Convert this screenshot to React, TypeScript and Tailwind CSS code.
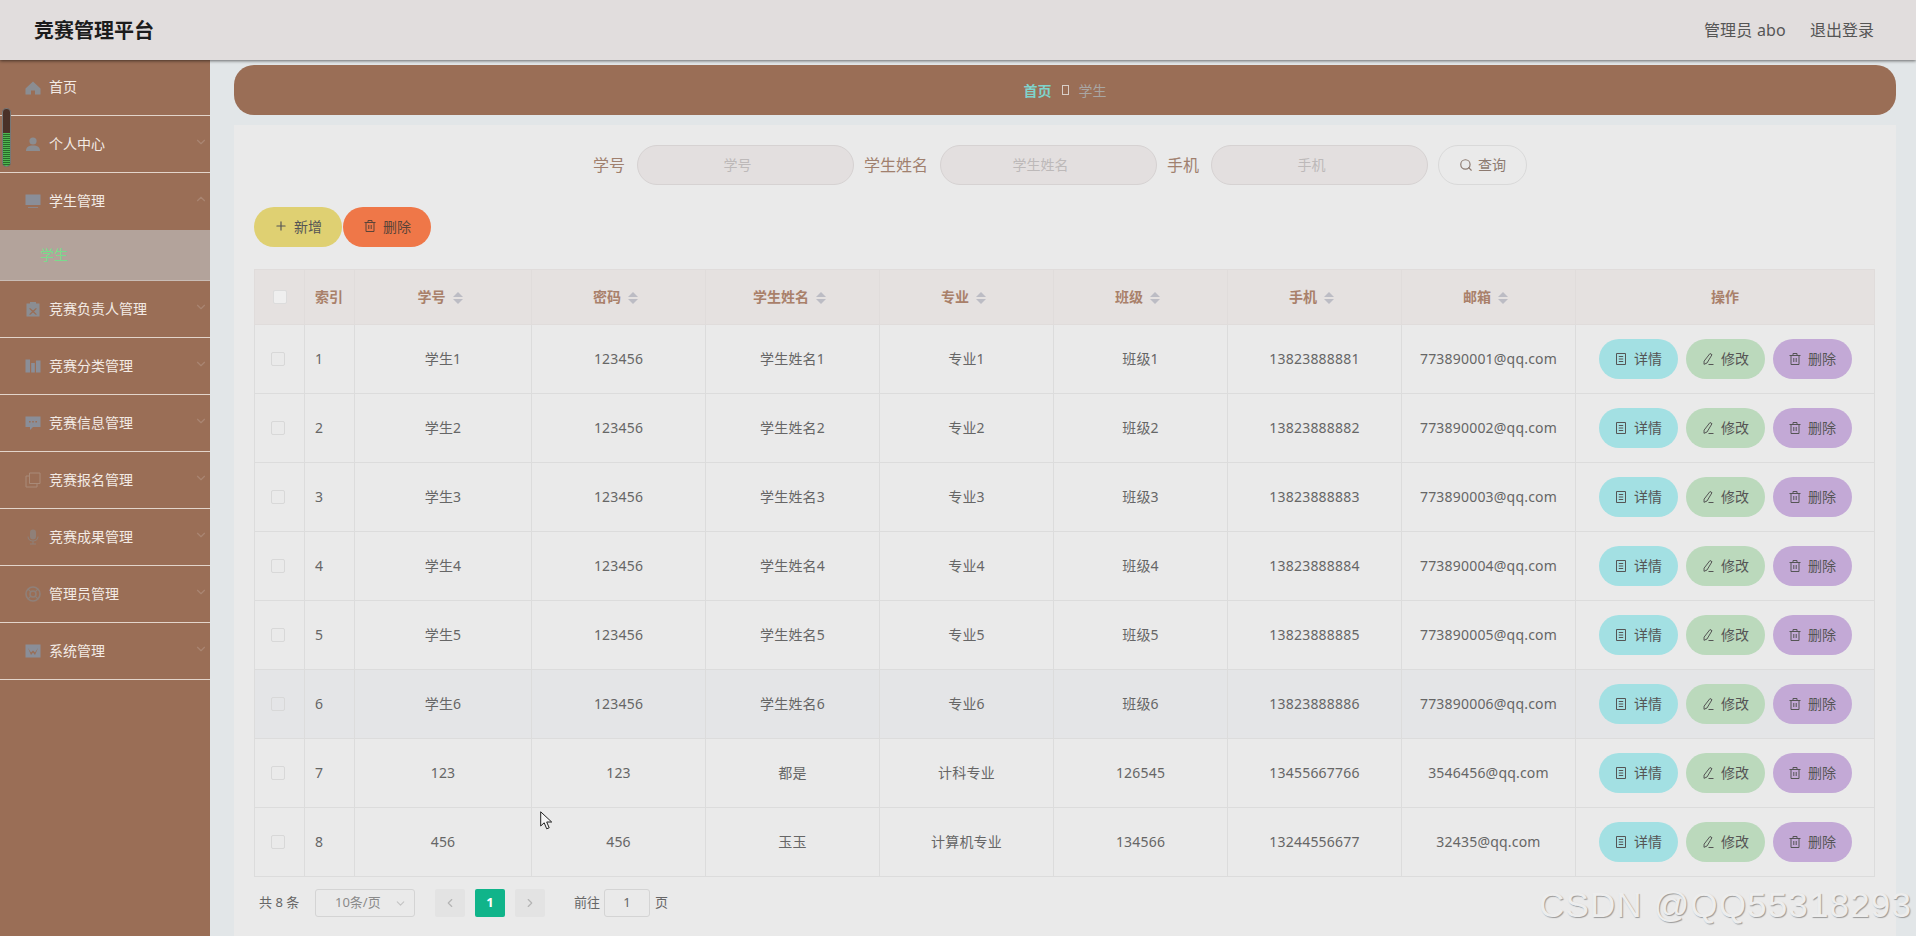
import React, { ReactNode } from "react";
import { FiChevronDown, FiChevronUp, FiChevronLeft, FiChevronRight, FiSearch, FiPlus } from "react-icons/fi";

const FONT = "font-['Noto_Sans','Noto_Sans_CJK_SC',sans-serif]";

const HomeIcon = () => (
  <svg viewBox="0 0 16 16" className="h-4 w-4" fill="currentColor">
    <path d="M8 1.500 15.500 8.500 V14.500 H10 V10.500 H6 V14.500 H.5 V8.500Z" />
  </svg>
);
const UserIcon = () => (
  <svg viewBox="0 0 16 16" className="h-4 w-4" fill="currentColor">
    <circle cx="8" cy="5" r="3.6" />
    <path d="M1 15c0-4 2.500-5.500 7-5.500s7 1.500 7 5.500z" />
  </svg>
);
const MonitorIcon = () => (
  <svg viewBox="0 0 16 16" className="h-4 w-4" fill="currentColor">
    <path d="M.5 1.500h15V12H.5z" />
    <path d="M3 14.200h10v.8H3z" />
  </svg>
);
const ClipboardIcon = () => (
  <svg viewBox="0 0 16 16" className="h-4 w-4" fill="currentColor">
    <path fillRule="evenodd" d="M1.500 2.500H5V1h6v1.500h3.500V15.500h-13zM5 7l3 2.500L11 7l.8.800L9 10.500l2.800 2.700-.8.800L8 11.500 5 14l-.8-.8L7 10.500 4.200 7.800z" />
  </svg>
);
const BarsIcon = () => (
  <svg viewBox="0 0 16 16" className="h-4 w-4" fill="currentColor">
    <path d="M.5 1.500h4.500v13H.5zM6.200 5h3.600v9.500H6.200zM11 2.500h4.500v12H11z" />
  </svg>
);
const ChatIcon = () => (
  <svg viewBox="0 0 16 16" className="h-4 w-4" fill="currentColor">
    <path fillRule="evenodd" d="M.5 1.500h15V12H8l-3 3v-3H.5zM4 6h1.600v1.600H4zM7.200 6h1.600v1.600H7.200zM10.400 6H12v1.600h-1.600z" />
  </svg>
);
const CopyIcon = () => (
  <svg viewBox="0 0 16 16" className="h-4 w-4" fill="none" stroke="currentColor" strokeWidth="1">
    <path d="M4.500 1h10.500v10.500H4.500z" />
    <path d="M4.500 4H1v11h11v-3.500" />
  </svg>
);
const MicIcon = () => (
  <svg viewBox="0 0 16 16" className="h-4 w-4" fill="currentColor">
    <rect x="5" y="0.500" width="6" height="10" rx="3" />
    <path d="M2.500 7.500h1c0 2.500 2 4 4.500 4s4.500-1.500 4.500-4h1c0 3-2.200 4.800-5 5V14.500h2.500v1h-6v-1H7.500v-2c-2.800-.2-5-2-5-5z" />
  </svg>
);
const HelpIcon = () => (
  <svg viewBox="0 0 16 16" className="h-4 w-4" fill="none" stroke="currentColor">
    <circle cx="8" cy="8" r="7" strokeWidth="1.600" />
    <circle cx="8" cy="8" r="3" strokeWidth="1.600" />
    <path d="M3 3l2.800 2.800M13 3l-2.800 2.800M3 13l2.800-2.800M13 13l-2.800-2.800" strokeWidth="1.200" />
  </svg>
);
const ChartIcon = () => (
  <svg viewBox="0 0 16 16" className="h-4 w-4" fill="currentColor">
    <path fillRule="evenodd" d="M.5 1.500h15v13H.5zM3 5l3 4.500L8 7.500l2 2L13 5l-3 7-2-2.500L6 12z" />
  </svg>
);
const DocIcon = () => (
  <svg viewBox="0 0 14 14" className="h-[14px] w-[14px]" fill="none" stroke="currentColor" strokeWidth="1">
    <path d="M2.500 1.500h9v11h-9zM4.800 4.500h4.400M4.800 7h4.400M4.800 9.500h4.400" />
  </svg>
);
const PenIcon = () => (
  <svg viewBox="0 0 14 14" className="h-[14px] w-[14px]" fill="none" stroke="currentColor" strokeWidth="1">
    <path d="M9 1.500l2 1.200L6 11l-3 1.300.1-3.200zM7.500 12.500h5" />
  </svg>
);
const TrashIcon = () => (
  <svg viewBox="0 0 14 14" className="h-[14px] w-[14px]" fill="none" stroke="currentColor" strokeWidth="1">
    <path d="M1.500 3.500h11M3 3.500v9h8v-9M5 3.500v-2h4v2M5.800 6v4M8.200 6v4" />
  </svg>
);

const MENU = [
  { label: "首页", icon: <HomeIcon />, color: "text-[#8b8d92]", plain: true },
  { label: "个人中心", icon: <UserIcon />, color: "text-[#8b8d92]" },
  { label: "学生管理", icon: <MonitorIcon />, color: "text-[#8a8e98]", open: true },
  { label: "竞赛负责人管理", icon: <ClipboardIcon />, color: "text-[#8b8d92]" },
  { label: "竞赛分类管理", icon: <BarsIcon />, color: "text-[#8a8e98]" },
  { label: "竞赛信息管理", icon: <ChatIcon />, color: "text-[#8a8e98]" },
  { label: "竞赛报名管理", icon: <CopyIcon />, color: "text-[#a98a78]" },
  { label: "竞赛成果管理", icon: <MicIcon />, color: "text-[#8f8079]" },
  { label: "管理员管理", icon: <HelpIcon />, color: "text-[#8f8079]" },
  { label: "系统管理", icon: <ChartIcon />, color: "text-[#8a8e98]" },
];

const ROWS = [
  ["1", "学生1", "123456", "学生姓名1", "专业1", "班级1", "13823888881", "773890001@qq.com"],
  ["2", "学生2", "123456", "学生姓名2", "专业2", "班级2", "13823888882", "773890002@qq.com"],
  ["3", "学生3", "123456", "学生姓名3", "专业3", "班级3", "13823888883", "773890003@qq.com"],
  ["4", "学生4", "123456", "学生姓名4", "专业4", "班级4", "13823888884", "773890004@qq.com"],
  ["5", "学生5", "123456", "学生姓名5", "专业5", "班级5", "13823888885", "773890005@qq.com"],
  ["6", "学生6", "123456", "学生姓名6", "专业6", "班级6", "13823888886", "773890006@qq.com"],
  ["7", "123", "123", "都是", "计科专业", "126545", "13455667766", "3546456@qq.com"],
  ["8", "456", "456", "玉玉", "计算机专业", "134566", "13244556677", "32435@qq.com"],
];

const COLUMNS = ["学号", "密码", "学生姓名", "专业", "班级", "手机", "邮箱"];

const Sidebar = () => (
  <aside className="w-[210px] shrink-0 bg-[#9a6e56]">
    {MENU.map((m) => (
      <div key={m.label}>
        <div
          className={`flex items-center border-b pl-[25px] pr-[2px] ${m.plain ? "h-[56px]" : "h-[57px]"} ${
            m.open ? "border-[#9a6e56]" : "border-[#e3d5cb]"
          }`}
        >
          <span className={`w-[24px] shrink-0 ${m.color}`}>{m.icon}</span>
          <span className="flex-1 pb-[2px] text-[14px] text-[#f3ebe5]">{m.label}</span>
          {!m.plain &&
            (m.open ? (
              <FiChevronUp className="mb-[5px] h-[14px] w-[14px] text-[#a98572]" />
            ) : (
              <FiChevronDown className="mb-[5px] h-[14px] w-[14px] text-[#a98572]" />
            ))}
        </div>
        {m.open && (
          <div className="flex h-[51px] items-center border-b border-[#c9bdb6] bg-[#b3a39b] pb-[2px] pl-[40px] text-[14px] text-[#78dc8c]">
            学生
          </div>
        )}
      </div>
    ))}
  </aside>
);

const SearchField = ({ label }: { label: string }) => (
  <>
    <span className="mr-px text-[16px] text-[#a0806e]">{label}</span>
    <div className="-mr-px flex h-[40px] w-[217px] items-center justify-center rounded-[20px] border border-[#d6d2d2] bg-[#e3dfdf] pb-[2px] pr-[16px] text-[14px] text-[#bdb9b9]">
      {label}
    </div>
  </>
);

const Caret = () => (
  <span className="ml-[7px] inline-flex flex-col gap-[2px] align-middle">
    <span className="h-0 w-0 border-x-[5px] border-b-[5px] border-x-transparent border-b-[#bcbcc4]" />
    <span className="h-0 w-0 border-x-[5px] border-t-[5px] border-x-transparent border-t-[#bcbcc4]" />
  </span>
);

const ActionButton = ({ bg, icon, children }: { bg: string; icon: ReactNode; children: ReactNode }) => (
  <button className={`flex h-[40px] w-[79px] items-center justify-center gap-[6px] rounded-[20px] pb-px text-[14px] text-[#555] ${bg}`}>
    {icon}
    {children}
  </button>
);

const StudentTable = () => (
  <table className="w-[1621px] table-fixed border-collapse border border-[#dcdcdc] text-[14px] text-[#666]">
    <thead>
      <tr className="h-[55px] bg-[#e5e1e0] text-[14px] font-bold text-[#a9806a]">
        <th className="w-[50px] border border-[#e0dcdb]">
          <span className="mx-auto block h-[14px] w-[14px] rounded-[2px] border border-[#dcdcdc] bg-[#efefef]" />
        </th>
        <th className="w-[50px] border border-[#e0dcdb] pb-[2px] pl-[10px] text-left font-bold">索引</th>
        {COLUMNS.map((c, i) => (
          <th key={c} className={`border border-[#e0dcdb] pb-[2px] pr-[6px] font-bold ${i === 0 ? "w-[177px]" : "w-[174px]"}`}>
            {c}
            <Caret />
          </th>
        ))}
        <th className="border border-[#e0dcdb] pb-[2px] font-bold">操作</th>
      </tr>
    </thead>
    <tbody>
      {ROWS.map((r) => (
        <tr key={r[0]} className={`h-[69px] ${r[0] === "6" ? "bg-[#e4e5e7]" : ""}`}>
          <td className="border border-[#dcdcdc]">
            <span className="mx-auto block h-[14px] w-[14px] -translate-x-[2px] rounded-[2px] border border-[#d8d8d8]" />
          </td>
          {r.map((v, i) => (
            <td key={i} className={`border border-[#dcdcdc] pb-[2px] tracking-[0.2px] ${i === 0 ? "pl-[10px]" : "text-center"}`}>
              {v}
            </td>
          ))}
          <td className="border border-[#dcdcdc]">
            <div className="flex justify-center gap-[8px]">
              <ActionButton bg="bg-[#a3e0e3]" icon={<DocIcon />}>详情</ActionButton>
              <ActionButton bg="bg-[#bbd9bc]" icon={<PenIcon />}>修改</ActionButton>
              <ActionButton bg="bg-[#c3a9d6]" icon={<TrashIcon />}>删除</ActionButton>
            </div>
          </td>
        </tr>
      ))}
    </tbody>
  </table>
);

const Pagination = () => (
  <div className="mt-[12px] flex h-[28px] items-center pl-[5px] text-[13px] text-[#666]">
    <span className="w-[56px]">共 8 条</span>
    <div className="flex h-[28px] w-[100px] items-center justify-between rounded-[3px] border border-[#d4d4d4] pl-[19px] pr-[7px] text-[#8a8a8a]">
      10条/页
      <FiChevronDown className="h-[13px] w-[13px] text-[#c4c4c4]" />
    </div>
    <div className="ml-[20px] flex h-[28px] w-[30px] items-center justify-center rounded-[2px] bg-[#e3e3e3] text-[#b4b4b4]">
      <FiChevronLeft className="h-[14px] w-[14px]" />
    </div>
    <div className="ml-[10px] flex h-[28px] w-[30px] items-center justify-center rounded-[2px] bg-[#10b48a] font-bold text-white">1</div>
    <div className="ml-[10px] flex h-[28px] w-[30px] items-center justify-center rounded-[2px] bg-[#e3e3e3] text-[#b4b4b4]">
      <FiChevronRight className="h-[14px] w-[14px]" />
    </div>
    <span className="ml-[29px]">前往</span>
    <div className="ml-[4px] flex h-[28px] w-[46px] items-center justify-center rounded-[3px] border border-[#d4d4d4]">1</div>
    <span className="ml-[5px]">页</span>
  </div>
);

export default function App() {
  return (
    <div className={`relative flex h-[936px] w-[1916px] flex-col overflow-hidden bg-[#e2e6e8] ${FONT}`}>
      <header className="relative z-10 flex h-[60px] shrink-0 items-center justify-between bg-[#e1dddd] pl-[34px] pr-[42px] shadow-[0_1px_3px_rgba(0,0,0,0.55)]">
        <span className="pt-[2px] text-[20px] font-bold text-[#1c1c1c]">竞赛管理平台</span>
        <div className="flex items-center gap-[24px] text-[16px] text-[#555]">
          <span className="tracking-[0.2px]">管理员 abo</span>
          <span>退出登录</span>
        </div>
      </header>
      <div className="flex flex-1">
        <Sidebar />
        <main className="flex flex-1 flex-col pl-[24px] pr-[20px]">
          <div className="mt-[5px] flex h-[50px] items-center justify-center gap-[10px] rounded-[20px] bg-[#9a6e56] text-[14px]">
            <span className="font-bold text-[#7fd3cb]">首页</span>
            <span className="h-[10px] w-[7px] border border-[#d9cfc8]" />
            <span className="text-[#a9a5a2]">学生</span>
          </div>
          <section className="mt-[10px] flex-1 bg-[#eaeaea] pl-[20px] pr-[21px] pt-[20px]">
            <div className="flex h-[40px] items-center justify-center gap-[11px] pr-[9px]">
              <SearchField label="学号" />
              <SearchField label="学生姓名" />
              <SearchField label="手机" />
              <button className="flex h-[40px] w-[89px] items-center justify-center gap-[5px] rounded-[20px] border border-[#d9d9d9] pb-px text-[14px] text-[#8c7a70]">
                <FiSearch className="h-[14px] w-[14px]" />
                查询
              </button>
            </div>
            <div className="mt-[22px] flex h-[40px] gap-px">
              <button className="flex w-[88px] items-center justify-center gap-[6px] rounded-[20px] bg-[#dfd072] pb-[2px] text-[14px] text-[#555]">
                <FiPlus className="h-[14px] w-[14px]" />
                新增
              </button>
              <button className="flex w-[88px] items-center justify-center gap-[6px] rounded-[20px] bg-[#ef7748] pb-[2px] text-[14px] text-[#5b4438]">
                <TrashIcon />
                删除
              </button>
            </div>
            <div className="mt-[22px]">
              <StudentTable />
            </div>
            <Pagination />
          </section>
        </main>
      </div>

      {/* volume meter overlay from the recording */}
      <div className="absolute left-[2px] top-[108px] flex h-[59px] w-[9px] flex-col justify-end overflow-hidden rounded-[4px] border border-[#777] bg-[#4a3128]">
        <div className="h-[33px] bg-[repeating-linear-gradient(to_bottom,#4fb84f_0px,#4fb84f_1px,#2a6a2a_1px,#2a6a2a_2px)]" />
      </div>

      {/* mouse pointer */}
      <svg viewBox="0 0 13 20" className="absolute left-[540px] top-[811px] h-[20px] w-[13px]" fill="#f4f4f4" stroke="#222" strokeWidth="1">
        <path d="M.7.800V15l3.500-3.200 2.500 6 2.500-1-2.500-5.800h5z" />
      </svg>

      {/* watermark */}
      <span className="absolute left-[1539px] top-[883px] font-['Liberation_Sans',sans-serif] text-[35px] leading-[44px] tracking-[1.15px] text-[#ededed] [text-shadow:1px_1px_1px_#9a9a9a]">
        CSDN @QQ55318293
      </span>
    </div>
  );
}
